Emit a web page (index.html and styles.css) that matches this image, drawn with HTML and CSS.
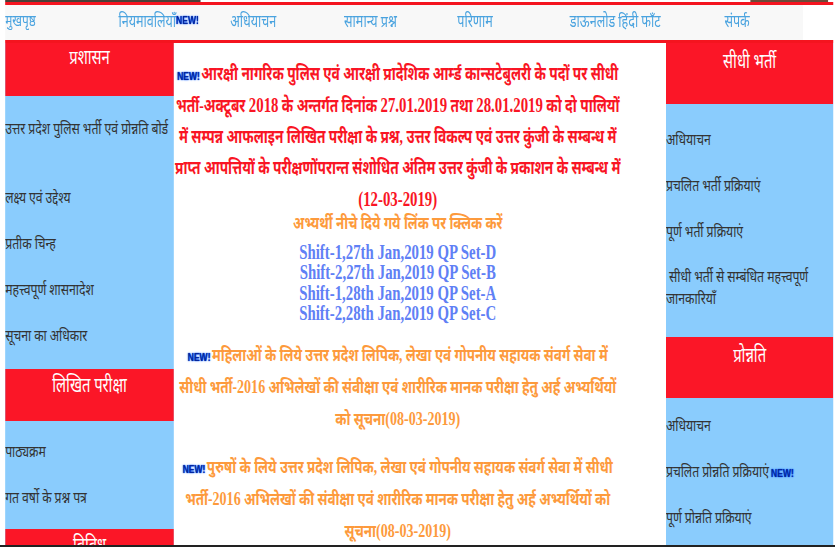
FILE: index.html
```html
<!DOCTYPE html>
<html lang="hi">
<head>
<meta charset="utf-8">
<title>भर्ती बोर्ड</title>
<link rel="stylesheet" href="styles.css">
</head>
<body>
<div class="frame">
<div class="page">
  <div class="banner"><span class="photo-left"></span><span class="photo-right"></span></div>
  <nav class="nav">
    <a class="n1">मुखपृष्ठ</a>
    <a class="n2">नियमावलियाँ<b class="new nav-new">NEW!</b></a>
    <a class="n3">अधियाचन</a>
    <a class="n4">सामान्य प्रश्न</a>
    <a class="n5">परिणाम</a>
    <a class="n6">डाऊनलोड हिंदी फॉंट</a>
    <a class="n7">संपर्क</a>
  </nav>
  <div class="columns">
    <aside class="side left">
      <h2 class="head h56">प्रशासन</h2>
      <div class="list l1">
        <a class="item first">उत्तर प्रदेश पुलिस भर्ती एवं प्रोन्नति बोर्ड</a>
        <a class="item">लक्ष्य एवं उद्देश्य</a>
        <a class="item">प्रतीक चिन्ह</a>
        <a class="item">महत्त्वपूर्ण शासनादेश</a>
        <a class="item">सूचना का अधिकार</a>
      </div>
      <h2 class="head h52">लिखित परीक्षा</h2>
      <div class="list l2">
        <a class="item">पाठ्यक्रम</a>
        <a class="item">गत वर्षो के प्रश्न पत्र</a>
      </div>
      <h2 class="head h52">विविध</h2>
    </aside>
    <main class="center">
      <p class="notice red"><b class="new">NEW!</b>आरक्षी नागरिक पुलिस एवं आरक्षी प्रादेशिक आर्म्ड कान्सटेबुलरी के पदों पर सीधी<br>भर्ती-अक्टूबर <span class="num">2018</span> के अन्तर्गत दिनांक <span class="num">27.01.2019</span> तथा <span class="num">28.01.2019</span> को दो पालियों<br>में सम्पन्न आफलाइन लिखित परीक्षा के प्रश्न, उत्तर विकल्प एवं उत्तर कुंजी के सम्बन्ध में<br>प्राप्त आपत्तियों के परीक्षणोंपरान्त संशोधित अंतिम उत्तर कुंजी के प्रकाशन के सम्बन्ध में<br><span class="num">(12-03-2019)</span></p>
      <p class="click">अभ्यर्थी नीचे दिये गये लिंक पर क्लिक करें</p>
      <ul class="links">
        <li>Shift-1,27th Jan,2019 QP Set-D</li>
        <li>Shift-2,27th Jan,2019 QP Set-B</li>
        <li>Shift-1,28th Jan,2019 QP Set-A</li>
        <li>Shift-2,28th Jan,2019 QP Set-C</li>
      </ul>
      <p class="notice orange p2"><b class="new">NEW!</b>महिलाओं के लिये उत्तर प्रदेश लिपिक, लेखा एवं गोपनीय सहायक संवर्ग सेवा में<br>सीधी भर्ती-<span class="num">2016</span> अभिलेखों की संवीक्षा एवं शारीरिक मानक परीक्षा हेतु अर्ह अभ्यर्थियों<br>को सूचना<span class="num">(08-03-2019)</span></p>
      <p class="notice orange p3"><b class="new">NEW!</b>पुरुषों के लिये उत्तर प्रदेश लिपिक, लेखा एवं गोपनीय सहायक संवर्ग सेवा में सीधी<br>भर्ती-<span class="num">2016</span> अभिलेखों की संवीक्षा एवं शारीरिक मानक परीक्षा हेतु अर्ह अभ्यर्थियों को<br>सूचना<span class="num">(08-03-2019)</span></p>
    </main>
    <aside class="side right">
      <h2 class="head h61">सीधी भर्ती</h2>
      <div class="list r1">
        <a class="item">अधियाचन</a>
        <a class="item">प्रचलित भर्ती प्रक्रियाएं</a>
        <a class="item">पूर्ण भर्ती प्रक्रियाएं</a>
        <a class="item wrap">&nbsp;सीधी भर्ती से सम्बंधित महत्त्वपूर्ण जानकारियाँ</a>
      </div>
      <h2 class="head h61">प्रोन्नति</h2>
      <div class="list r2">
        <a class="item">अधियाचन</a>
        <a class="item">प्रचलित प्रोन्नति प्रक्रियाएं<b class="new side-new">NEW!</b></a>
        <a class="item">पूर्ण प्रोन्नति प्रक्रियाएं</a>
      </div>
    </aside>
  </div>
</div>
</div>
</body>
</html>
```
FILE: styles.css
```css
* { box-sizing: border-box; }
html, body { margin: 0; height: 547px; overflow: hidden; background: #fff; }
body { font-family: "Liberation Serif", "Noto Sans", serif; border-bottom: 2px solid #222; }
.frame { width: 835px; height: 545px; overflow: hidden; }
/* The whole page is a wide layout squeezed horizontally to 74%; widths below are pre-squeeze. */
.page { width: 1128px; height: 545px; padding-left: 7px; overflow: hidden; transform: scaleX(.74); transform-origin: 0 0; }
.banner { display: flex; justify-content: space-between; height: 5px; width: 1119px; border-bottom: 3px solid #f4141f; }
.photo-left { width: 264px; height: 2px; background: #4a4038; }
.photo-right { width: 105px; height: 2px; margin-right: 7px; background: #6d4a38; }
.nav { position: relative; height: 35px; width: 1078px; background: #f8f8f8; font-size: 17px; color: #4aa3df; }
.nav a { position: absolute; top: 4px; white-space: nowrap; }
.n1 { left: 0; font-size: 16px; } .n2 { left: 153px; } .n3 { left: 304px; } .n4 { left: 458px; }
.n5 { left: 611px; } .n6 { left: 763px; } .n7 { left: 972px; }
.columns { display: flex; width: 1119px; border-top: 3px solid #f4141f; height: 507px; }
.side { flex: none; background: #8accfd; overflow: hidden; }
.left { width: 228px; }
.right { width: 226px; }
.head { margin: 0; background: #fb1627; color: #fff; font-weight: 400; font-size: 20px; text-align: center; line-height: 24px; padding-top: 3px; }
.h56 { height: 53px; padding-top: 2px; }
.h52 { height: 52px; padding-top: 4px; }
.h61 { height: 61px; padding-top: 6px; }
.list { display: flex; flex-direction: column; font-size: 16.5px; color: #333; }
.item { display: block; line-height: 18px; margin-bottom: 28px; }
.l1 { height: 273px; padding-top: 24px; }
.first { margin-bottom: 51px; white-space: nowrap; }
.l2 { height: 108px; padding-top: 22px; }
.r1 { height: 233px; padding-top: 27px; }
.r2 { padding-top: 19px; }
.wrap { line-height: 22px; margin-top: -3px; }
.center { flex: none; width: 665px; background: #fff; padding: 16px 60px 0 0; text-align: center; font-weight: 700; font-size: 18.5px; line-height: 31px; white-space: nowrap; }
.notice { margin: 0; }
.red { color: #f91524; }
.orange { color: #fd9a3c; font-size: 18.2px; line-height: 32px; }
.orange .num { font-size: 19px; }
.num { font-size: 20px; }
.click { margin: -3px 0 0; color: #fd9a3c; font-size: 18px; line-height: 20px; }
.links { margin: 9px 0 0; padding: 0; list-style: none; color: #6080f5; font-size: 20px; line-height: 20.3px; }
.p2 { margin-top: 16px; }
.p3 { margin-top: 16px; }
.new { color: #06269b; font: 700 11.5px/1 "Liberation Sans", sans-serif; text-shadow: 0 0 2px #0a5cff, 0 0 1px #0a5cff; margin-right: 2px; }
.nav-new { vertical-align: 3px; }
.side-new { margin-left: 3px; }
```
